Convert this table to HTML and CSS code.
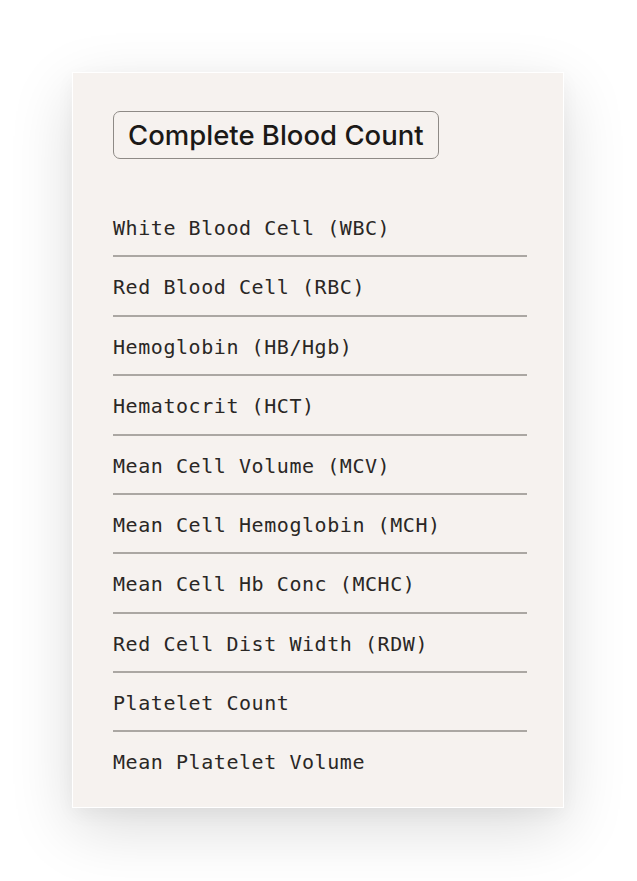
FILE: index.html
```html
<!DOCTYPE html>
<html>
<head>
<meta charset="utf-8">
<link rel="stylesheet" href="styles.css">
</head>
<body>
<div class="card">
  <div class="title">Complete Blood Count</div>
  <ul class="list">
    <li>White Blood Cell (WBC)</li>
    <li>Red Blood Cell (RBC)</li>
    <li>Hemoglobin (HB/Hgb)</li>
    <li>Hematocrit (HCT)</li>
    <li>Mean Cell Volume (MCV)</li>
    <li>Mean Cell Hemoglobin (MCH)</li>
    <li>Mean Cell Hb Conc (MCHC)</li>
    <li>Red Cell Dist Width (RDW)</li>
    <li>Platelet Count</li>
    <li>Mean Platelet Volume</li>
  </ul>
</div>
</body>
</html>
```

FILE: styles.css
```css
html, body {
  margin: 0;
  padding: 0;
  background: #ffffff;
}
body {
  padding: 72px 73px 80px 72px;
}
.card {
  box-sizing: content-box;
  width: 414px;
  background: #f6f2ef;
  border: 1px solid #ffffff;
  padding: 38px 36px 17px 40px;
  box-shadow: 0 20px 60px rgba(0, 0, 0, 0.14), 0 6px 18px rgba(0, 0, 0, 0.04);
}
.title {
  display: inline-block;
  font-family: Inter, "Noto Sans", sans-serif;
  font-weight: 500;
  font-size: 27.5px;
  line-height: 46px;
  color: #1b1917;
  border: 1px solid #8e8a86;
  border-radius: 7px;
  padding: 0 14px;
  letter-spacing: 0;
}
.list {
  list-style: none;
  margin: 39px 0 0 0;
  padding: 0;
}
.list li {
  font-family: "DejaVu Sans Mono", "Liberation Mono", monospace;
  font-size: 20px;
  letter-spacing: 0.56px;
  line-height: 24px;
  font-weight: 300;
  color: #2a2725;
  padding: 18px 0 15.375px 0;
  border-bottom: 2px solid #aba7a3;
}
.list li:last-child {
  border-bottom: none;
}
```
